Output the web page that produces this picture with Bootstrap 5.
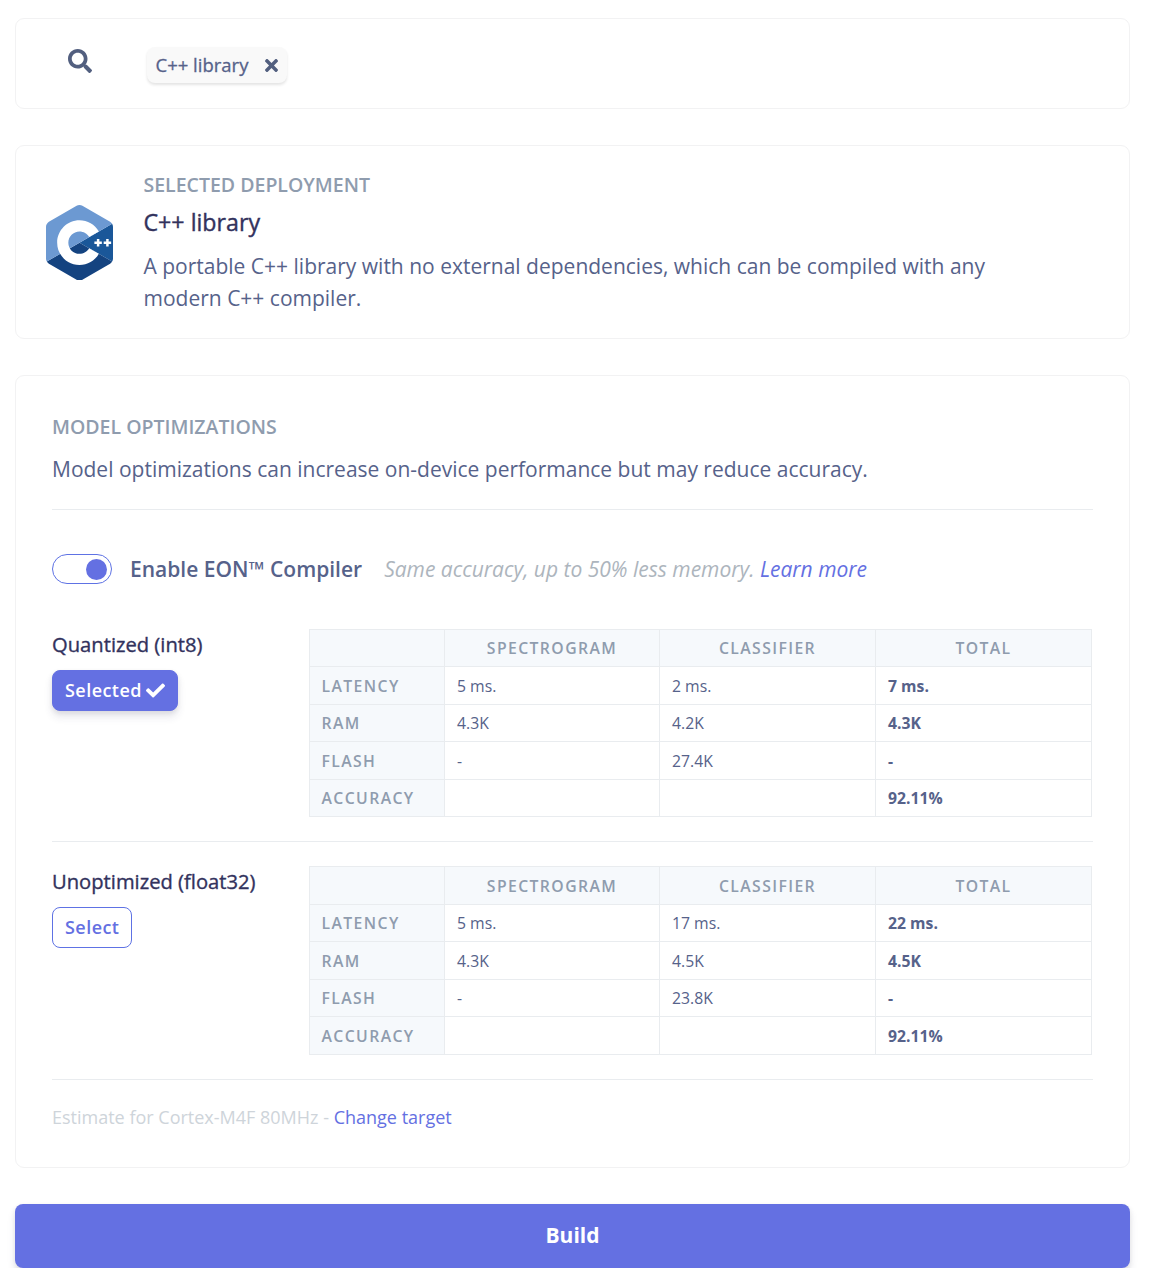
<!DOCTYPE html>
<html lang="en">
<head>
<meta charset="utf-8">
<meta name="viewport" content="width=device-width, initial-scale=1">
<title>Deployment</title>
<link href="https://cdn.jsdelivr.net/npm/bootstrap@5.3.0/dist/css/bootstrap.min.css" rel="stylesheet">
<style>
body{font-family:"Open Sans",sans-serif;font-size:21px;font-weight:400;line-height:32px;color:#56628a;background:#fff;overflow:hidden}
.page-col{width:1130px;padding:18px 0 0 15px}
.panel{border:1px solid #f2f2f3;border-radius:9px;background:#fff;margin-bottom:36px}
.search-panel{height:91px;padding:28px 51px}
.target-panel{height:194px;padding:23px 30px}
.model-panel{height:793px;padding:36px 36px 0}
.search-panel svg.lens{width:24px;height:24px;margin:2px 55px 0 1px}
.chip{height:36px;padding:0 9px 0 8.5px;border-radius:8px;background:#f9f9f9;box-shadow:0 2px 3px rgba(0,0,0,.11);font-size:18.5px;-webkit-text-stroke:.3px #56628a}
.chip svg{width:13px;height:19px;margin-left:16.5px}
.logo{width:67px;height:75.4px;margin:36px 30.5px 0 0}
.eyebrow{font-size:19.5px;line-height:30px;font-weight:600;color:#8f9cae;text-transform:uppercase;margin:0}
.target-panel .eyebrow{padding-top:1px}
.name{font-size:23.2px;line-height:34px;font-weight:400;-webkit-text-stroke:.4px #32325d;color:#32325d;margin:5px 0 11px}
.blurb{max-width:870px;margin:0}
.intro{margin:11px 0 24px}
.rule{height:1px;background:#e9ecef}
.link{color:#6470e2;text-decoration:none}
.switch-row{margin:43.1px 0 43.8px}
.eon{font-weight:600;margin:0 22px 0 18px}
.toggle{width:60px;height:30px;border:1px solid #5e72e4;border-radius:15px;padding:4px}
.toggle span{width:21px;height:21px;border-radius:50%;background:#6470e2}
.hint{font-style:italic;color:#adb5bd}
.variant-name{font-size:20.2px;line-height:30px;font-weight:400;-webkit-text-stroke:.35px #32325d;color:#32325d;margin:0 0 11px}
.btn-pick{font-size:18px;font-weight:600;line-height:27px;letter-spacing:.45px;padding:6px 12px;height:41px;border-radius:8px;border:1px solid #5e72e4;color:#6470e2}
.btn-pick.on{background:#6470e2;border-color:#6470e2;color:#fff;box-shadow:0 6px 9px rgba(50,50,93,.11),0 2px 5px rgba(0,0,0,.08)}
.btn-pick svg{width:19px;height:19px;margin:-3px 0 0 4px}
.variant-side{width:257px}
.stats{width:783px;table-layout:fixed;border-collapse:collapse;font-size:15.75px;line-height:24px;margin:0}
.stats th,.stats td{border:1px solid #e9ecef;padding:0 12px;height:37.5px}
.stats th{background:#f6f9fc;color:#8f9cae;font-weight:600;letter-spacing:1.4px;text-transform:uppercase}
.stats tbody th{padding-left:11.5px}
.stats thead th{text-align:center}
.stats td:last-child{font-weight:700}
.estimate{font-size:18px;line-height:28px;color:#ced4da;margin:23.5px 0 0}
.btn-build{width:1115px;height:64px;border-radius:8px;background:#6470e2;border:0;color:#fff;font-size:21px;font-weight:700;box-shadow:0 6px 9px rgba(50,50,93,.11),0 2px 5px rgba(0,0,0,.08)}
</style>
<script src="https://cdn.jsdelivr.net/npm/bootstrap@5.3.0/dist/js/bootstrap.bundle.min.js"></script>
</head>
<body>
<main class="page-col">
  <section class="panel search-panel d-flex align-items-start">
    <svg class="lens" viewBox="0 0 512 512" fill="#525f7f"><path d="M505 442.7L405.3 343c-4.500-4.500-10.600-7-17-7H372c27.600-35.300 44-79.700 44-128C416 93.100 322.900 0 208 0S0 93.100 0 208s93.100 208 208 208c48.300 0 92.700-16.400 128-44v16.300c0 6.400 2.500 12.500 7 17l99.700 99.700c9.400 9.400 24.600 9.400 33.900 0l28.300-28.300c9.400-9.400 9.400-24.600.1-34zM208 336c-70.700 0-128-57.200-128-128 0-70.700 57.200-128 128-128 70.700 0 128 57.200 128 128 0 70.700-57.200 128-128 128z"/></svg>
    <span class="chip d-inline-flex align-items-center">C++ library
      <svg viewBox="0 0 352 512" fill="#525f7f"><path d="M242.720 256l100.070-100.070c12.280-12.280 12.280-32.190 0-44.480l-22.240-22.240c-12.280-12.280-32.190-12.280-44.480 0L176 189.280 75.930 89.210c-12.280-12.280-32.190-12.280-44.480 0L9.210 111.450c-12.280 12.280-12.280 32.190 0 44.480L109.280 256 9.210 356.070c-12.280 12.280-12.280 32.190 0 44.480l22.240 22.240c12.280 12.280 32.200 12.280 44.480 0L176 322.720l100.070 100.070c12.280 12.280 32.200 12.280 44.480 0l22.240-22.240c12.280-12.280 12.280-32.190 0-44.480L242.720 256z"/></svg>
    </span>
  </section>

  <section class="panel target-panel d-flex align-items-start">
    <svg class="logo flex-shrink-0" viewBox="0 0 306 344.350"><path fill="#1a5799" d="M302.107,258.262c2.401-4.159,3.893-8.845,3.893-13.053V99.140c0-4.208-1.490-8.893-3.892-13.052L153,172.175L302.107,258.262z"/><path fill="#144380" d="M166.250,341.193l126.500-73.034c3.644-2.104,6.956-5.737,9.357-9.897L153,172.175L3.893,258.263c2.401,4.159,5.714,7.793,9.357,9.896l126.500,73.034C147.037,345.401,158.963,345.401,166.250,341.193z"/><path fill="#6c99d2" d="M302.108,86.087c-2.402-4.160-5.715-7.793-9.358-9.897L166.250,3.156c-7.287-4.208-19.213-4.208-26.500,0L13.250,76.190C5.962,80.397,0,90.725,0,99.140v146.069c0,4.208,1.491,8.894,3.893,13.053L153,172.175L302.108,86.087z"/><path fill="#fff" d="M153,274.175c-56.243,0-102-45.757-102-102s45.757-102,102-102c36.292,0,70.139,19.530,88.331,50.968l-44.143,25.544c-9.105-15.736-26.038-25.512-44.188-25.512c-28.122,0-51,22.878-51,51c0,28.121,22.878,51,51,51c18.152,0,35.085-9.776,44.191-25.515l44.143,25.543C223.142,254.644,189.294,274.175,153,274.175z"/><path fill="#fff" d="M255,166.508h-11.334v-11.333h-11.332v11.333H221v11.333h11.334v11.334h11.332v-11.334H255zM297.500,166.508h-11.334v-11.333h-11.332v11.333H263.500v11.333h11.334v11.334h11.332v-11.334H297.500z"/></svg>
    <div>
      <h6 class="eyebrow">Selected deployment</h6>
      <h3 class="name">C++ library</h3>
      <p class="blurb">A portable C++ library with no external dependencies, which can be compiled with any modern C++ compiler.</p>
    </div>
  </section>

  <section class="panel model-panel">
    <h6 class="eyebrow">Model optimizations</h6>
    <p class="intro">Model optimizations can increase on-device performance but may reduce accuracy.</p>
    <div class="rule"></div>
    <div class="d-flex align-items-center switch-row">
      <div class="toggle d-flex justify-content-end align-items-center"><span></span></div>
      <span class="eon">Enable EON™ Compiler</span>
      <span class="hint">Same accuracy, up to 50% less memory. <a class="link" href="#">Learn more</a></span>
    </div>
    <div class="d-flex">
      <div class="variant-side">
        <h5 class="variant-name">Quantized (int8)</h5>
        <button class="btn btn-pick on">Selected<svg viewBox="0 0 512 512" fill="#fff"><path d="M173.898 439.404l-166.400-166.400c-9.997-9.997-9.997-26.206 0-36.204l36.203-36.204c9.997-9.998 26.207-9.998 36.204 0L192 312.690 432.095 72.596c9.997-9.997 26.207-9.997 36.204 0l36.203 36.204c9.997 9.997 9.997 26.206 0 36.204l-294.400 294.401c-9.998 9.997-26.207 9.997-36.204-.001z"/></svg></button>
      </div>
      <table class="stats">
        <colgroup><col width="135"><col width="215"><col width="216"><col width="216"></colgroup>
        <thead><tr><th></th><th>Spectrogram</th><th>Classifier</th><th>Total</th></tr></thead>
        <tbody>
          <tr><th>Latency</th><td>5 ms.</td><td>2 ms.</td><td>7 ms.</td></tr>
          <tr><th>RAM</th><td>4.3K</td><td>4.2K</td><td>4.3K</td></tr>
          <tr><th>Flash</th><td>-</td><td>27.4K</td><td>-</td></tr>
          <tr><th>Accuracy</th><td></td><td></td><td>92.11%</td></tr>
        </tbody>
      </table>
    </div>
    <div class="rule my-4"></div>
    <div class="d-flex">
      <div class="variant-side">
        <h5 class="variant-name">Unoptimized (float32)</h5>
        <button class="btn btn-pick">Select</button>
      </div>
      <table class="stats">
        <colgroup><col width="135"><col width="215"><col width="216"><col width="216"></colgroup>
        <thead><tr><th></th><th>Spectrogram</th><th>Classifier</th><th>Total</th></tr></thead>
        <tbody>
          <tr><th>Latency</th><td>5 ms.</td><td>17 ms.</td><td>22 ms.</td></tr>
          <tr><th>RAM</th><td>4.3K</td><td>4.5K</td><td>4.5K</td></tr>
          <tr><th>Flash</th><td>-</td><td>23.8K</td><td>-</td></tr>
          <tr><th>Accuracy</th><td></td><td></td><td>92.11%</td></tr>
        </tbody>
      </table>
    </div>
    <div class="rule mt-4"></div>
    <p class="estimate">Estimate for Cortex-M4F 80MHz - <a class="link" href="#">Change target</a></p>
  </section>
  <button class="btn btn-build">Build</button>
</main>
</body>
</html>
